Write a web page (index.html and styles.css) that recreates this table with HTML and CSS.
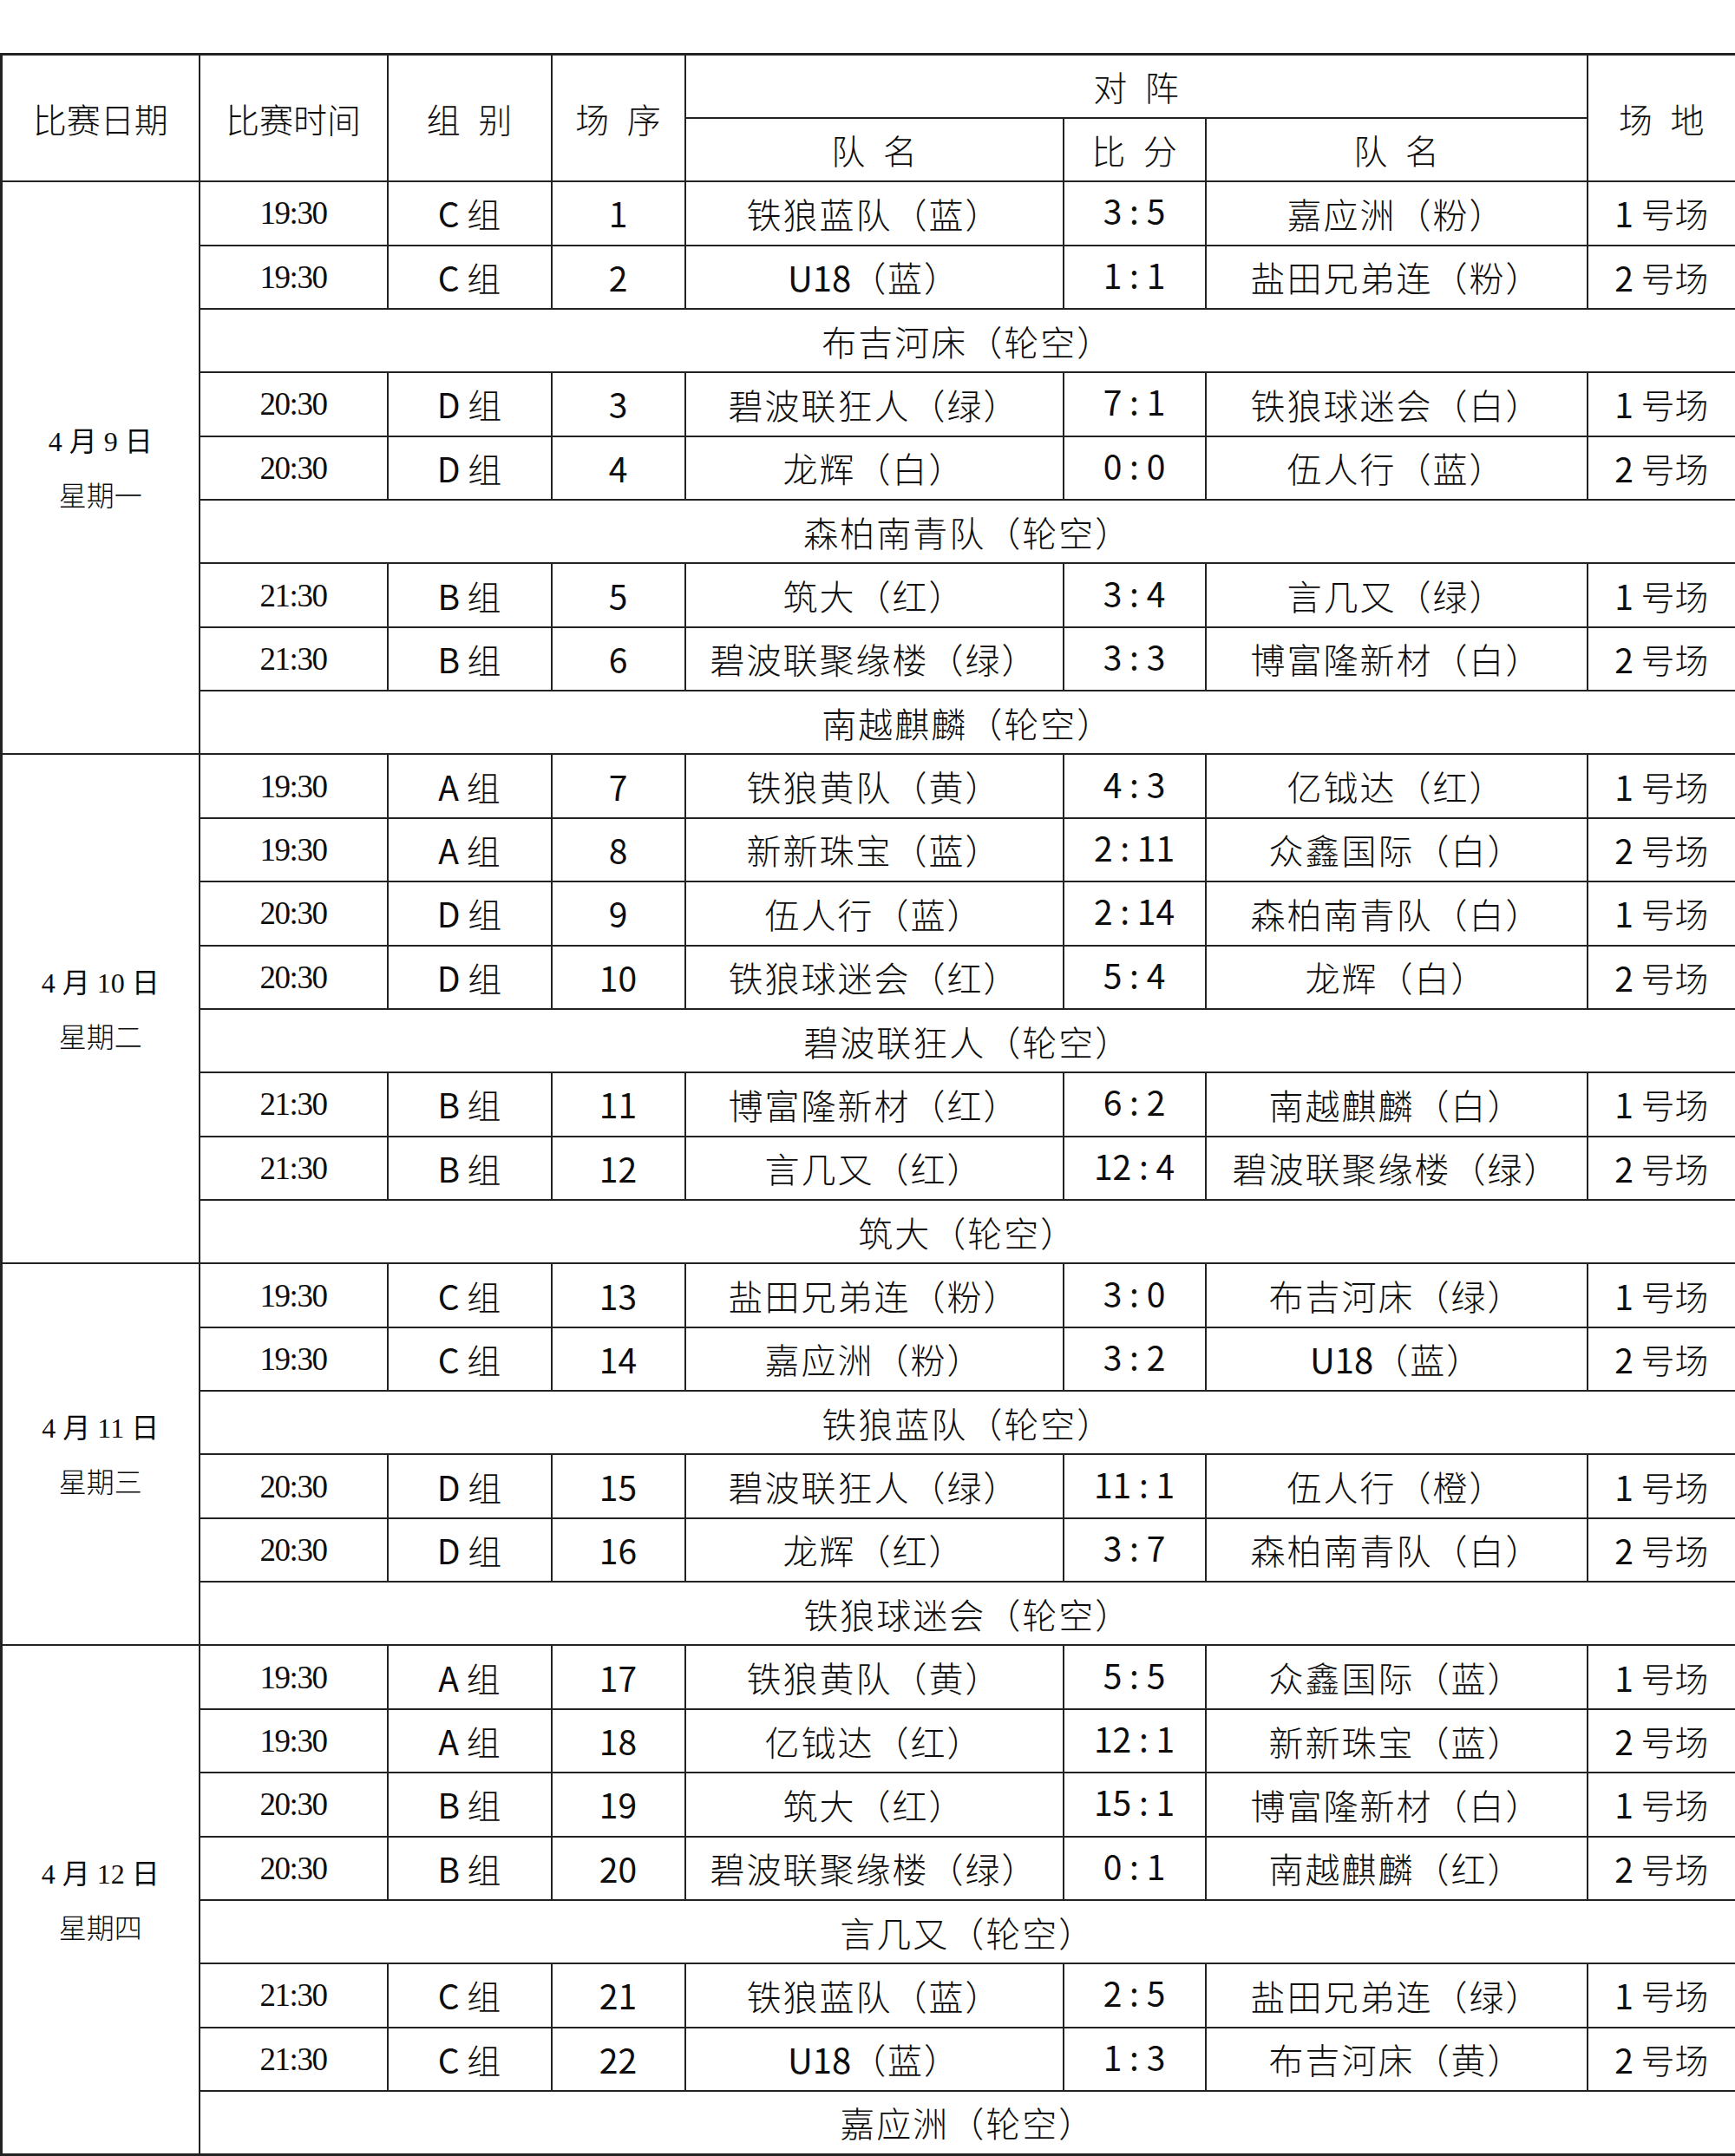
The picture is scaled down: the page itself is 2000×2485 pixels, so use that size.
FILE: index.html
```html
<!DOCTYPE html>
<html lang="zh-CN">
<head>
<meta charset="utf-8">
<title>赛程表</title>
<link rel="stylesheet" href="styles.css">
</head>
<body>
<table class="sched">
<colgroup>
<col class="c-date"><col class="c-time"><col class="c-grp"><col class="c-no"><col class="c-team"><col class="c-score"><col class="c-team2"><col class="c-venue">
</colgroup>
<thead>
<tr>
<th rowspan="2">比赛日期</th>
<th rowspan="2">比赛时间</th>
<th rowspan="2" class="sp">组 别</th>
<th rowspan="2" class="sp">场 序</th>
<th colspan="3" class="sp">对 阵</th>
<th rowspan="2" class="sp">场 地</th>
</tr>
<tr>
<th class="sp">队 名</th>
<th class="sp">比 分</th>
<th class="sp">队 名</th>
</tr>
</thead>
<tbody>
<tr>
<td rowspan="9" class="date"><span>4 月 9 日</span><span>星期一</span></td>
<td class="time">19:30</td><td><b class="lat">C</b> 组</td><td class="no">1</td><td class="team">铁狼蓝队（蓝）</td><td class="score">3 : 5</td><td class="team">嘉应洲（粉）</td><td><b class="lat">1</b> 号场</td>
</tr>
<tr><td class="time">19:30</td><td><b class="lat">C</b> 组</td><td class="no">2</td><td class="team"><b class="lat">U18</b>（蓝）</td><td class="score">1 : 1</td><td class="team">盐田兄弟连（粉）</td><td><b class="lat">2</b> 号场</td></tr>
<tr><td colspan="7" class="team">布吉河床（轮空）</td></tr>
<tr><td class="time">20:30</td><td><b class="lat">D</b> 组</td><td class="no">3</td><td class="team">碧波联狂人（绿）</td><td class="score">7 : 1</td><td class="team">铁狼球迷会（白）</td><td><b class="lat">1</b> 号场</td></tr>
<tr><td class="time">20:30</td><td><b class="lat">D</b> 组</td><td class="no">4</td><td class="team">龙辉（白）</td><td class="score">0 : 0</td><td class="team">伍人行（蓝）</td><td><b class="lat">2</b> 号场</td></tr>
<tr><td colspan="7" class="team">森柏南青队（轮空）</td></tr>
<tr><td class="time">21:30</td><td><b class="lat">B</b> 组</td><td class="no">5</td><td class="team">筑大（红）</td><td class="score">3 : 4</td><td class="team">言几又（绿）</td><td><b class="lat">1</b> 号场</td></tr>
<tr><td class="time">21:30</td><td><b class="lat">B</b> 组</td><td class="no">6</td><td class="team">碧波联聚缘楼（绿）</td><td class="score">3 : 3</td><td class="team">博富隆新材（白）</td><td><b class="lat">2</b> 号场</td></tr>
<tr><td colspan="7" class="team">南越麒麟（轮空）</td></tr>

<tr>
<td rowspan="8" class="date"><span>4 月 10 日</span><span>星期二</span></td>
<td class="time">19:30</td><td><b class="lat">A</b> 组</td><td class="no">7</td><td class="team">铁狼黄队（黄）</td><td class="score">4 : 3</td><td class="team">亿钺达（红）</td><td><b class="lat">1</b> 号场</td>
</tr>
<tr><td class="time">19:30</td><td><b class="lat">A</b> 组</td><td class="no">8</td><td class="team">新新珠宝（蓝）</td><td class="score">2 : 11</td><td class="team">众鑫国际（白）</td><td><b class="lat">2</b> 号场</td></tr>
<tr><td class="time">20:30</td><td><b class="lat">D</b> 组</td><td class="no">9</td><td class="team">伍人行（蓝）</td><td class="score">2 : 14</td><td class="team">森柏南青队（白）</td><td><b class="lat">1</b> 号场</td></tr>
<tr><td class="time">20:30</td><td><b class="lat">D</b> 组</td><td class="no">10</td><td class="team">铁狼球迷会（红）</td><td class="score">5 : 4</td><td class="team">龙辉（白）</td><td><b class="lat">2</b> 号场</td></tr>
<tr><td colspan="7" class="team">碧波联狂人（轮空）</td></tr>
<tr><td class="time">21:30</td><td><b class="lat">B</b> 组</td><td class="no">11</td><td class="team">博富隆新材（红）</td><td class="score">6 : 2</td><td class="team">南越麒麟（白）</td><td><b class="lat">1</b> 号场</td></tr>
<tr><td class="time">21:30</td><td><b class="lat">B</b> 组</td><td class="no">12</td><td class="team">言几又（红）</td><td class="score">12 : 4</td><td class="team">碧波联聚缘楼（绿）</td><td><b class="lat">2</b> 号场</td></tr>
<tr><td colspan="7" class="team">筑大（轮空）</td></tr>

<tr>
<td rowspan="6" class="date"><span>4 月 11 日</span><span>星期三</span></td>
<td class="time">19:30</td><td><b class="lat">C</b> 组</td><td class="no">13</td><td class="team">盐田兄弟连（粉）</td><td class="score">3 : 0</td><td class="team">布吉河床（绿）</td><td><b class="lat">1</b> 号场</td>
</tr>
<tr><td class="time">19:30</td><td><b class="lat">C</b> 组</td><td class="no">14</td><td class="team">嘉应洲（粉）</td><td class="score">3 : 2</td><td class="team"><b class="lat">U18</b>（蓝）</td><td><b class="lat">2</b> 号场</td></tr>
<tr><td colspan="7" class="team">铁狼蓝队（轮空）</td></tr>
<tr><td class="time">20:30</td><td><b class="lat">D</b> 组</td><td class="no">15</td><td class="team">碧波联狂人（绿）</td><td class="score">11 : 1</td><td class="team">伍人行（橙）</td><td><b class="lat">1</b> 号场</td></tr>
<tr><td class="time">20:30</td><td><b class="lat">D</b> 组</td><td class="no">16</td><td class="team">龙辉（红）</td><td class="score">3 : 7</td><td class="team">森柏南青队（白）</td><td><b class="lat">2</b> 号场</td></tr>
<tr><td colspan="7" class="team">铁狼球迷会（轮空）</td></tr>

<tr>
<td rowspan="8" class="date"><span>4 月 12 日</span><span>星期四</span></td>
<td class="time">19:30</td><td><b class="lat">A</b> 组</td><td class="no">17</td><td class="team">铁狼黄队（黄）</td><td class="score">5 : 5</td><td class="team">众鑫国际（蓝）</td><td><b class="lat">1</b> 号场</td>
</tr>
<tr><td class="time">19:30</td><td><b class="lat">A</b> 组</td><td class="no">18</td><td class="team">亿钺达（红）</td><td class="score">12 : 1</td><td class="team">新新珠宝（蓝）</td><td><b class="lat">2</b> 号场</td></tr>
<tr><td class="time">20:30</td><td><b class="lat">B</b> 组</td><td class="no">19</td><td class="team">筑大（红）</td><td class="score">15 : 1</td><td class="team">博富隆新材（白）</td><td><b class="lat">1</b> 号场</td></tr>
<tr><td class="time">20:30</td><td><b class="lat">B</b> 组</td><td class="no">20</td><td class="team">碧波联聚缘楼（绿）</td><td class="score">0 : 1</td><td class="team">南越麒麟（红）</td><td><b class="lat">2</b> 号场</td></tr>
<tr><td colspan="7" class="team">言几又（轮空）</td></tr>
<tr><td class="time">21:30</td><td><b class="lat">C</b> 组</td><td class="no">21</td><td class="team">铁狼蓝队（蓝）</td><td class="score">2 : 5</td><td class="team">盐田兄弟连（绿）</td><td><b class="lat">1</b> 号场</td></tr>
<tr><td class="time">21:30</td><td><b class="lat">C</b> 组</td><td class="no">22</td><td class="team"><b class="lat">U18</b>（蓝）</td><td class="score">1 : 3</td><td class="team">布吉河床（黄）</td><td><b class="lat">2</b> 号场</td></tr>
<tr><td colspan="7" class="team">嘉应洲（轮空）</td></tr>
</tbody>
</table>
</body>
</html>
```
FILE: styles.css
```css
html, body {
  margin: 0;
  padding: 0;
  background: #ffffff;
}
body {
  padding-top: 61px;
  font-family: "Noto Sans CJK SC", "Noto Sans", sans-serif;
  color: #0d0d0d;
}
.sched {
  width: 2000px;
  table-layout: fixed;
  border-collapse: collapse;
  border: 3px solid #222222;
}
.c-date { width: 228px; }
.c-time { width: 217px; }
.c-grp { width: 189px; }
.c-no { width: 154px; }
.c-team { width: 436px; }
.c-score { width: 164px; }
.c-team2 { width: 440px; }
.c-venue { width: 172px; }

.sched tr {
  height: 73.36px;
}
.sched th,
.sched td {
  border: 2px solid #222222;
  padding: 0;
  text-align: center;
  vertical-align: middle;
  font-size: 39px;
  font-weight: 300;
  line-height: 1;
  white-space: nowrap;
}
.sched .sp {
  word-spacing: 12px;
}
.sched td.team {
  font-size: 40px;
  letter-spacing: 2px;
}
.lat {
  font-weight: 400;
  letter-spacing: 0;
}
.sched td.no {
  font-weight: 400;
}
.sched td.time {
  font-family: "Liberation Serif", "Times New Roman", serif;
  font-size: 37px;
  font-weight: 400;
  letter-spacing: -1.5px;
}
.sched td.score {
  font-weight: 400;
  padding-bottom: 6px;
}
.sched td.date {
  font-family: "Liberation Serif", "Noto Sans CJK SC", serif;
  font-size: 32px;
  font-weight: 400;
}
.date span {
  display: block;
  line-height: 60px;
}
.date span + span {
  font-family: "Noto Sans CJK SC", sans-serif;
  font-weight: 300;
}
```
